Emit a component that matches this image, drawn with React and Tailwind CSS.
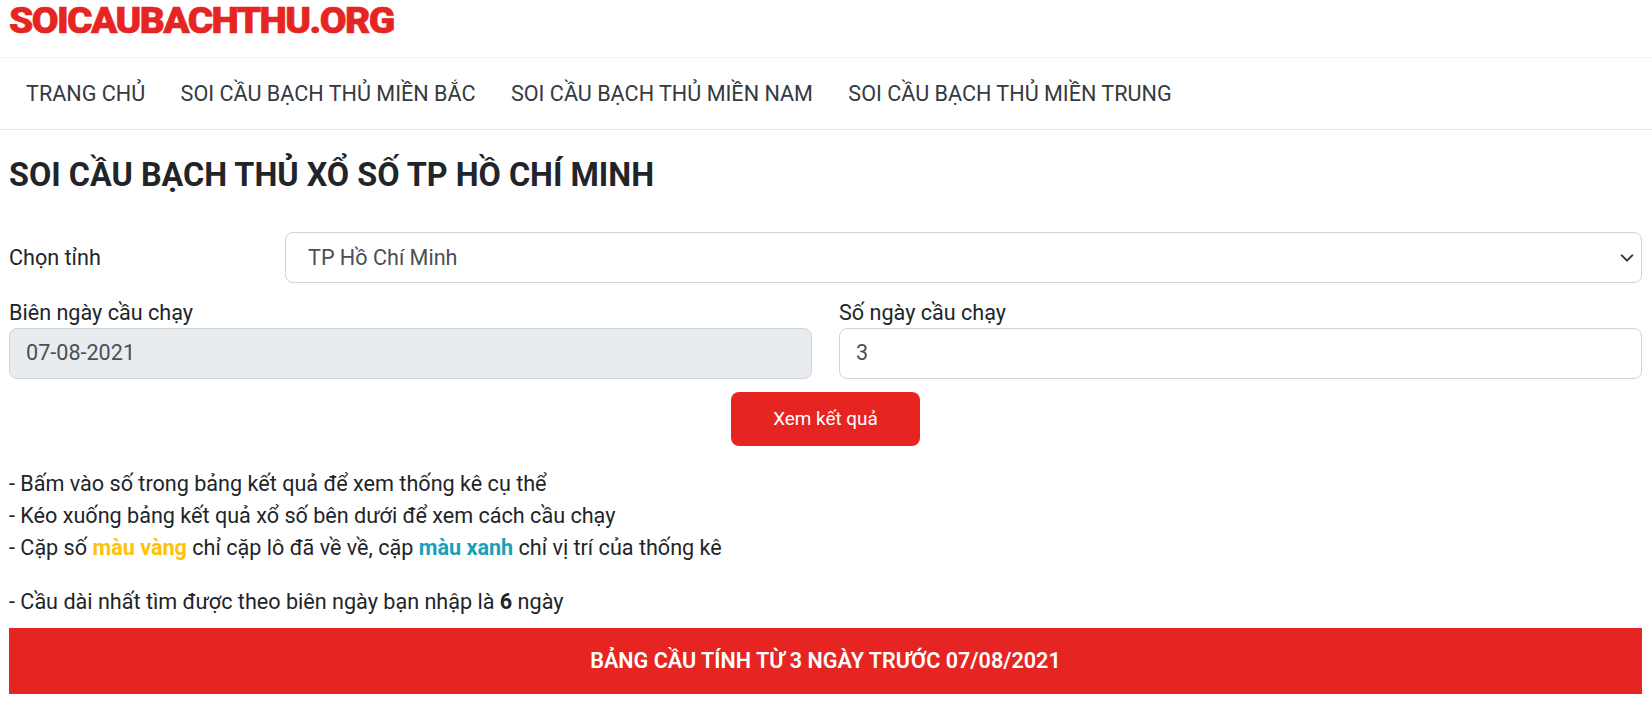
export default function App() {
  return (
    <div className="min-h-[702px] bg-white text-[21.6px] text-[#212529] font-['Roboto',sans-serif]">
      <header className="h-[58px] border-b border-[#f2f2f2] pl-[9px] pt-[1px]">
        <div className="h-[40px] w-[386px] origin-top-left scale-x-[1.08] whitespace-nowrap text-[36px] leading-[40px] font-black tracking-[-1.5px] text-[#e62522] [-webkit-text-stroke:0.6px_#e62522]">
          SOICAUBACHTHU.ORG
        </div>
      </header>
      <nav className="flex h-[72px] items-center gap-[35.4px] border-b border-[#e7e7e7] pl-[26px] pt-[1px] text-[#343a40]">
        <a>TRANG CHỦ</a>
        <a>SOI CẦU BẠCH THỦ MIỀN BẮC</a>
        <a>SOI CẦU BẠCH THỦ MIỀN NAM</a>
        <a>SOI CẦU BẠCH THỦ MIỀN TRUNG</a>
      </nav>
      <main className="pl-[9px] pr-[10px]">
        <h1 className="mt-[23px] text-[32.4px] leading-[44px] font-bold text-[#212529]">SOI CẦU BẠCH THỦ XỔ SỐ TP HỒ CHÍ MINH</h1>
        <div className="mt-[35px] flex items-center">
          <label className="w-[276px] pt-[1px]">Chọn tỉnh</label>
          <div className="relative flex h-[51px] flex-1 items-center rounded-[8px] border border-[#ced4da] pl-[22px] pt-[1px] text-[#495057]">
            TP Hồ Chí Minh
            <svg className="absolute right-[7px] top-[18px] h-[14px] w-[14px]" viewBox="0 0 16 16" fill="none" stroke="#343a40" strokeWidth="2.4" strokeLinecap="round" strokeLinejoin="round">
              <path d="M2 5l6 6 6-6" />
            </svg>
          </div>
        </div>
        <div className="mt-[14px] grid grid-cols-2 gap-[27px]">
          <div>
            <label className="block h-[31px] leading-[31px]">Biên ngày cầu chạy</label>
            <div className="flex h-[51px] items-center rounded-[8px] border border-[#ced4da] bg-[#e9ecef] pl-[16px] text-[#495057]">07-08-2021</div>
          </div>
          <div>
            <label className="block h-[31px] leading-[31px]">Số ngày cầu chạy</label>
            <div className="flex h-[51px] items-center rounded-[8px] border border-[#ced4da] bg-white pl-[16px] text-[#495057]">3</div>
          </div>
        </div>
        <div className="mt-[13px] flex justify-center">
          <button className="h-[54px] w-[189px] rounded-[8px] bg-[#e62522] text-[18.9px] font-normal text-white">Xem kết quả</button>
        </div>
        <div className="mt-[22px] leading-[32px]">
          <p>- Bấm vào số trong bảng kết quả để xem thống kê cụ thể</p>
          <p>- Kéo xuống bảng kết quả xổ số bên dưới để xem cách cầu chạy</p>
          <p>- Cặp số <b className="text-[#ffc107]">màu vàng</b> chỉ cặp lô đã về về, cặp <b className="text-[#17a2b8]">màu xanh</b> chỉ vị trí của thống kê</p>
          <p className="mt-[22px]">- Cầu dài nhất tìm được theo biên ngày bạn nhập là <b>6</b> ngày</p>
        </div>
        <div className="mt-[10px] flex h-[66px] items-center justify-center bg-[#e62522] pt-[1px] font-semibold text-white">BẢNG CẦU TÍNH TỪ 3 NGÀY TRƯỚC 07/08/2021</div>
      </main>
    </div>
  );
}
